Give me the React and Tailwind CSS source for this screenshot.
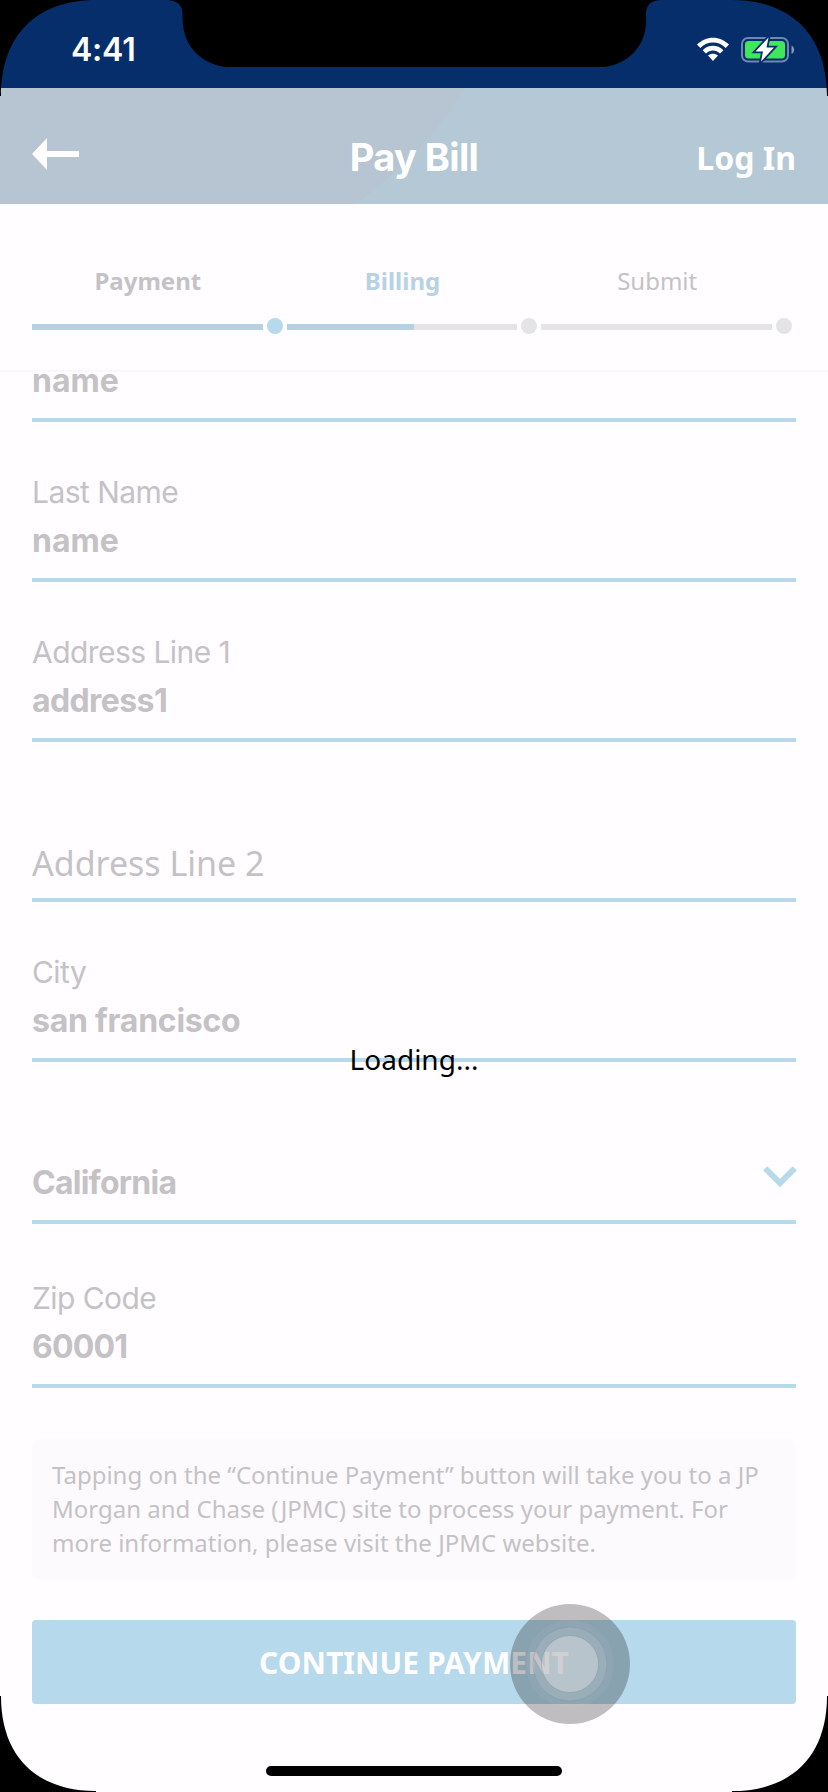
const ui = "font-['Noto_Sans',sans-serif]";
const inter = "font-['Inter',sans-serif]";

function DeviceFrame() {
  return (
    <svg className="pointer-events-none absolute inset-0" width="828" height="1792" viewBox="0 0 828 1792" fill="#000">
      <path d="M0 0H96C36 0 1 36 1 96H0Z" />
      <path d="M828 0H732C792 0 827 36 827 96H828Z" />
      <path d="M167 0C178 1 182.500 5 182.500 14C182.500 22 183 26 184 31C188 51 207 66 228 67H602C623 66 641 51 645 31C646 26 646 20 646 12C647 4 652 0 662 0Z" />
      <path d="M0 1696H1C1 1756 36 1791 96 1791V1792H0Z" />
      <path d="M828 1696H827C827 1756 792 1791 732 1791V1792H828Z" />
    </svg>
  );
}

function Wifi() {
  return (
    <svg width="32" height="25" viewBox="0 0 32 25" fill="#fff">
      <path d="M0 7.600C9 -1.600 23 -1.600 32 7.600L28.700 10.900C21.500 3.700 10.500 3.700 3.300 10.900Z" />
      <path d="M5.600 13.200C11.500 7.300 20.500 7.300 26.400 13.200L23 16.500C19 12.600 13 12.600 9 16.500Z" />
      <path d="M11 18.500C14 16 18 16 21 18.500L16 24Z" />
    </svg>
  );
}

function Battery() {
  return (
    <svg width="54" height="27" viewBox="0 0 54 27" className="overflow-visible">
      <rect x="1" y="1" width="46" height="23.500" rx="6" fill="none" stroke="#6c87b0" strokeWidth="2" />
      <path d="M50.500 8.500C54 10 54 15.500 50.500 17Z" fill="#8299bb" />
      <rect x="4" y="4" width="40" height="17.500" rx="3.500" fill="#3fe85b" />
      <path d="M27.500 .5L14.500 14.500H22L20 24.500L33 10.500H25.500Z" fill="#fff" stroke="#052e6b" strokeWidth="3.600" paintOrder="stroke" />
    </svg>
  );
}

function Field({ label, value, height = "h-[160px]", children }) {
  return (
    <div className={`flex shrink-0 flex-col justify-end border-b-4 border-[#b6d9eb] pb-[17px] ${inter} text-[#c4c2c5] ${height}`}>
      {label}
      <div className="flex h-10 items-center justify-between">
        {value}
        {children}
      </div>
    </div>
  );
}

const labelBase = "mb-[9px] text-[30px] leading-10 font-normal tracking-[-0.55px] whitespace-nowrap";
const valueBase = "text-[32px] leading-10 font-bold whitespace-nowrap";

export default function App() {
  return (
    <div className={`relative flex h-[1792px] w-[828px] flex-col overflow-hidden bg-[#fffdff] ${ui}`}>
      <div className="flex h-[88px] shrink-0 items-start justify-between bg-[#052e6b] pt-[30px] pr-[33px] pl-[71px] text-white">
        <span className={`${inter} text-[32px] leading-10 font-semibold tracking-[-0.2px]`}>4:41</span>
        <div className="flex gap-[12px] pt-[7px]">
          <Wifi />
          <Battery />
        </div>
      </div>

      <header className="relative flex h-[116px] shrink-0 items-center justify-between bg-[#b7c4d1] pr-8 pl-8 text-white">
        <svg className="absolute inset-0" width="828" height="116" viewBox="0 0 828 116">
          <path d="M355 116C400 84 438 44 465 0H828V116Z" fill="#b5c8d5" />
        </svg>
        <svg className="relative mt-4" width="47" height="32" viewBox="0 0 47 32" fill="#fffdff">
          <path d="M0 16L15 0V13H47V19H15V32Z" />
        </svg>
        <h1 className={`absolute inset-x-0 top-[44px] text-center ${inter} text-[38px] leading-[50px] font-bold tracking-[-0.6px]`}>Pay Bill</h1>
        <a className="relative pt-[24px] text-[32px] leading-10 font-bold">Log In</a>
      </header>

      <section className="flex h-[168px] shrink-0 flex-col border-b-2 border-[#f8f7fb] px-8 pt-[60px]">
        <div className="grid grid-cols-3 text-center text-2xl leading-[34px] text-[#c4c2c5]">
          <span className="pr-[23px] font-bold">Payment</span>
          <span className="pr-[23px] font-bold text-[#b6d2e4]">Billing</span>
          <span className="pr-[23px]">Submit</span>
        </div>
        <div className="mt-5 flex h-4 items-center">
          <div className="mt-[2px] h-[6px] w-[231px] bg-[#b5d1e2]" />
          <div className="mx-1 size-4 rounded-full bg-[#b6d9eb]" />
          <div className="mt-[2px] h-[6px] w-[127px] bg-[#b5d1e2]" />
          <div className="mt-[2px] h-[6px] w-[103px] bg-[#e5e3e6]" />
          <div className="mx-1 size-4 rounded-full bg-[#e4e3e6]" />
          <div className="mt-[2px] h-[6px] w-[231px] bg-[#e5e3e6]" />
          <div className="ml-1 size-4 rounded-full bg-[#e4e3e6]" />
        </div>
      </section>

      <main className="flex flex-col px-8">
        <Field height="h-[50px]" value={<span className={valueBase}>name</span>} />
        <Field label={<label className={labelBase}>Last Name</label>} value={<span className={valueBase}>name</span>} />
        <Field label={<label className={labelBase}>Address Line 1</label>} value={<span className={`${valueBase} tracking-[-0.6px]`}>address1</span>} />
        <div className="flex h-[160px] shrink-0 flex-col justify-end border-b-4 border-[#b6d9eb] pb-[15px] text-[34px] leading-10 text-[#c4c2c5]">
          <span>Address Line 2</span>
        </div>
        <Field label={<label className={labelBase}>City</label>} value={<span className={`${valueBase} tracking-[-0.25px]`}>san francisco</span>} />
        <Field height="h-[162px]" value={<span className={`${valueBase} tracking-[-0.75px]`}>California</span>}>
          <svg className="-mr-px mb-[12px]" width="34" height="22" viewBox="0 0 34 22" fill="none" stroke="#b6d9eb" strokeWidth="6">
            <path d="M2.250 2.250L17 17L31.750 2.250" />
          </svg>
        </Field>
        <Field height="h-[164px]" label={<label className={labelBase}>Zip Code</label>} value={<span className={`${valueBase} tracking-[-0.8px]`}>60001</span>} />

        <p className="mt-[51px] h-[141px] rounded-lg bg-[#fcfafd] pt-[19px] pl-5 text-2xl leading-[34px] whitespace-nowrap text-[#c4c2c5]">
          Tapping on the “Continue Payment” button will take you to a JP<br />
          Morgan and Chase (JPMC) site to process your payment. For<br />
          more information, please visit the JPMC website.
        </p>
        <button className="mt-10 h-[84px] rounded bg-[#b6d9eb] text-[30px] font-bold tracking-[0.05px] text-[#fffdff]">CONTINUE PAYMENT</button>
      </main>

      <div className="absolute inset-x-0 top-[1039px] text-center text-[28px] leading-10 text-black">Loading...</div>

      <svg className="absolute top-[1604px] left-[510px]" width="120" height="120" viewBox="0 0 120 120">
        <circle cx="60" cy="60" r="60" fill="#000" fillOpacity=".25" />
        <circle cx="60" cy="60" r="44" fill="#dcdcdc" fillOpacity=".08" />
        <circle cx="60" cy="60" r="37" fill="#dcdcdc" fillOpacity=".16" stroke="#8199a7" strokeOpacity=".5" />
        <circle cx="60" cy="60" r="28.500" fill="#dde0e4" fillOpacity=".45" stroke="#8199a7" strokeOpacity=".5" />
      </svg>

      <div className="absolute top-[1766px] left-[266px] h-[10px] w-[296px] rounded-full bg-black" />
      <DeviceFrame />
    </div>
  );
}
